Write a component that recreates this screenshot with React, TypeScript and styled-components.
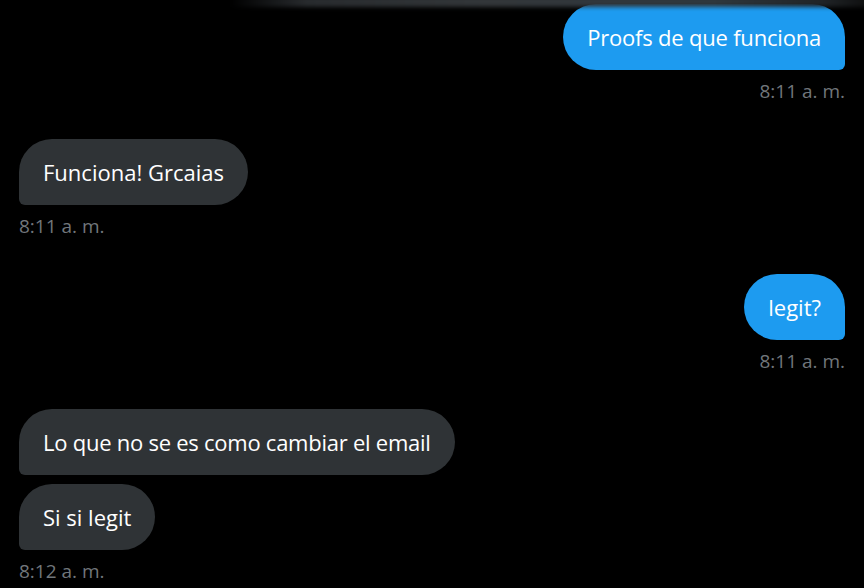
import styled, { createGlobalStyle } from 'styled-components';

const GlobalStyle = createGlobalStyle`
  html, body {
    margin: 0;
    padding: 0;
    background: #000000;
  }
  body {
    font-family: 'Open Sans', 'Noto Sans', sans-serif;
    color: #e7e9ea;
    overflow: hidden;
  }
`;

const Page = styled.div`
  width: 864px;
  height: 588px;
  position: relative;
  overflow: hidden;
  background: #000000;
`;

// shadow of the header bar above the conversation
const HeaderShade = styled.div`
  position: absolute;
  top: -4px;
  left: 230px;
  right: -10px;
  height: 11px;
  background: linear-gradient(
    to right,
    rgba(40, 44, 47, 0) 0%,
    #282b2e 12%,
    #33373a 40%,
    #2f383e 75%,
    #202427 92%,
    #0c0c0c 100%
  );
  filter: blur(2px);
  z-index: 2;
`;

const Thread = styled.div`
  display: flex;
  flex-direction: column;
  padding: 4px 19px 0 19px;
`;

const Group = styled.div<{ $mine?: boolean }>`
  display: flex;
  flex-direction: column;
  align-items: ${(p) => (p.$mine ? 'flex-end' : 'flex-start')};
  gap: 9px;
  margin-bottom: 36px;
`;

const Bubble = styled.div<{ $mine?: boolean; $squeeze?: number }>`
  box-sizing: border-box;
  height: 66px;
  padding: 0 24px;
  display: flex;
  align-items: center;
  font-size: 22px;
  line-height: 30px;
  letter-spacing: ${(p) => p.$squeeze ?? 0}px;
  color: #ffffff;
  white-space: nowrap;
  background: ${(p) => (p.$mine ? '#1d9bf0' : '#2f3336')};
  border-radius: ${(p) => (p.$mine ? '33px 33px 6px 33px' : '33px 33px 33px 6px')};
`;

const Stamp = styled.div`
  height: 24px;
  line-height: 24px;
  font-size: 19px;
  color: #71767b;
  white-space: nowrap;
`;

type Message = { text: string; squeeze?: number };
type Entry = { mine: boolean; messages: Message[]; time: string };

const conversation: Entry[] = [
  { mine: true, messages: [{ text: 'Proofs de que funciona', squeeze: -0.2 }], time: '8:11 a. m.' },
  { mine: false, messages: [{ text: 'Funciona! Grcaias' }], time: '8:11 a. m.' },
  { mine: true, messages: [{ text: 'legit?' }], time: '8:11 a. m.' },
  {
    mine: false,
    messages: [
      { text: 'Lo que no se es como cambiar el email', squeeze: -0.25 },
      { text: 'Si si legit' },
    ],
    time: '8:12 a. m.',
  },
];

export default function App() {
  return (
    <Page>
      <GlobalStyle />
      <HeaderShade />
      <Thread>
        {conversation.map((entry, i) => (
          <Group key={i} $mine={entry.mine}>
            {entry.messages.map((m, j) => (
              <Bubble key={j} $mine={entry.mine} $squeeze={m.squeeze}>
                {m.text}
              </Bubble>
            ))}
            <Stamp>{entry.time}</Stamp>
          </Group>
        ))}
      </Thread>
    </Page>
  );
}
